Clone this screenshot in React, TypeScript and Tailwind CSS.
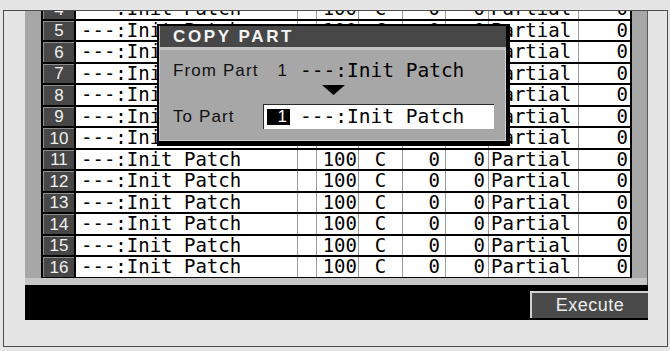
import React from 'react'

const mono = { fontFamily: '"DejaVu Sans Mono", "Liberation Mono", monospace' }
const sans = { fontFamily: '"Liberation Sans", Arial, sans-serif' }

const rowNums = [4, 5, 6, 7, 8, 9, 10, 11, 12, 13, 14, 15, 16]

function PartRow({ n }: { n: number }) {
  return (
    <div className="flex h-[21.5px] border-b-2 border-black text-[19px] leading-none text-black" style={mono}>
      <div className="flex w-[33px] border-l-2 border-black">
        <div
          className="flex flex-1 items-center justify-center border-l border-t border-[#8e8e8e] bg-[#474747] text-[17px] text-[#f0f0f0]"
          style={sans}
        >
          {n}
        </div>
      </div>
      <div className="flex w-[223px] items-center border-l-2 border-black bg-white pl-[5px] whitespace-pre">
        ---:Init Patch
      </div>
      <div className="w-[19px] border-l border-[#9c9c9c] bg-white" />
      <div className="flex w-[42px] items-center justify-end border-l border-[#9c9c9c] bg-white pr-[1px]">100</div>
      <div className="flex w-[44px] items-center justify-center border-l border-[#9c9c9c] bg-white">C</div>
      <div className="flex w-[43px] items-center justify-end border-l border-[#9c9c9c] bg-white pr-[5px]">0</div>
      <div className="flex w-[43px] items-center justify-end border-l border-[#9c9c9c] bg-white pr-[3px]">0</div>
      <div className="flex w-[90px] items-center border-l border-[#9c9c9c] bg-white pl-[2px]">Partial</div>
      <div className="flex w-[54px] items-center justify-end border-l border-r-2 border-l-[#9c9c9c] border-r-black bg-white pr-[2px]">
        0
      </div>
    </div>
  )
}

function CopyPartDialog() {
  return (
    <div className="absolute left-[157px] top-[24px] flex h-[122px] w-[353px] flex-col border-b-[5px] border-l-2 border-r-[4px] border-t-2 border-black bg-[#a7a7a7]">
      <div
        className="flex h-[21px] items-center border-l border-[#bcbcbc] bg-[#474747] pl-[13px] text-[17px] font-bold tracking-[2.6px] text-[#f4f4f4]"
        style={sans}
      >
        COPY PART
      </div>
      <div className="flex flex-1 flex-col border-l border-r border-b border-t-[3px] border-l-[#c4c4c4] border-r-[#cfcfcf] border-b-[#cfcfcf] border-t-[#c2c2c2]">
        <div className="mt-[8px] flex h-[26px] items-center">
          <div className="w-[103px] pl-[13px] text-[17px] tracking-[1.1px] text-[#111]" style={sans}>
            From Part
          </div>
          <div className="ml-[4px] flex w-[23px] justify-end pr-[3px] text-[17px] text-[#111]" style={sans}>
            1
          </div>
          <div className="ml-[10px] text-[19.5px] text-black whitespace-pre" style={mono}>
            ---:Init Patch
          </div>
        </div>
        <div className="mt-[1px] flex h-[10px] pl-[162px]">
          <svg width="23" height="10" viewBox="0 0 23 10">
            <polygon points="0,0 23,0 11.5,10" fill="#000" />
          </svg>
        </div>
        <div className="mt-[9px] flex h-[25px] items-center">
          <div className="w-[103px] pl-[13px] text-[17px] tracking-[1.1px] text-[#111]" style={sans}>
            To Part
          </div>
          <div className="flex h-[25px] w-[231px] items-center border-l border-t border-[#2a2a2a] bg-white">
            <div
              className="ml-[3px] flex h-[16px] w-[23px] items-center justify-end bg-black pr-[3px] text-[17px] text-white"
              style={sans}
            >
              1
            </div>
            <div className="ml-[10px] text-[19.5px] text-black whitespace-pre" style={mono}>
              ---:Init Patch
            </div>
          </div>
        </div>
      </div>
    </div>
  )
}

export default function App() {
  return (
    <div className="relative h-[351px] w-[670px] overflow-hidden bg-[#e5e5e5] pl-[3px] pt-[10px]">
      <div className="flex h-[337px] w-[665px] flex-col border border-[#4d4d4d] pl-[21px]">
        <div className="flex h-[274px] w-[623px] flex-col border-r border-[#5a5a5a] bg-[#a7a7a7]">
          <div className="h-[267px] overflow-hidden pl-[16px]">
            <div className="mt-[-12px] w-[591px]">
              {rowNums.map((n) => (
                <PartRow key={n} n={n} />
              ))}
            </div>
          </div>
          <div className="h-[7px] bg-[#c6c6c6]" />
        </div>
        <div className="flex h-[35px] w-[623px] justify-end bg-black pt-[6px]">
          <div
            className="flex h-[27px] w-[118px] items-center justify-center border-l-2 border-t-2 border-[#d2d2d2] bg-[#4a4a4a] text-[18px] tracking-[0.5px] text-[#ececec]"
            style={sans}
          >
            Execute
          </div>
        </div>
      </div>
      <CopyPartDialog />
    </div>
  )
}
